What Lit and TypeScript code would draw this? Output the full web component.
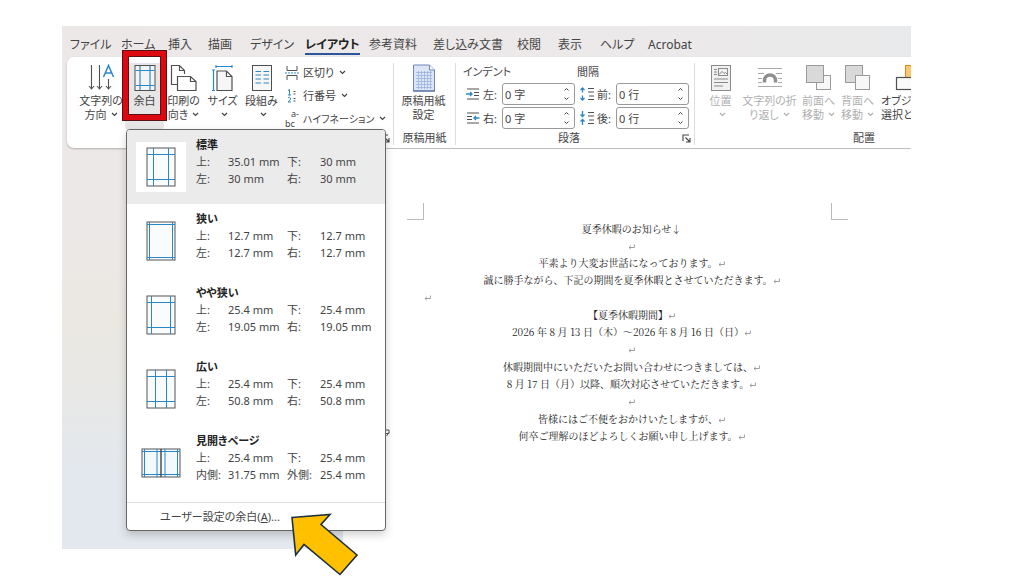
import { LitElement, html, svg, css } from "lit";
import { customElement, property } from "lit/decorators.js";

const GREY = "#505050";
const BLUE = "#2b88c8";

const icon = (w: number, h: number, body: unknown) =>
  html`<svg width=${w} height=${h} viewBox="0 0 ${w} ${h}" fill="none" aria-hidden="true">${body}</svg>`;

const chevron = html`<svg class="chev" width="7" height="5" viewBox="0 0 7 5" fill="none" stroke="currentColor" stroke-width="1.2" aria-hidden="true"><path d="M1 1l2.5 2.5L6 1"/></svg>`;

const icons = {
  direction: icon(28, 28, svg`
    <g stroke=${GREY} stroke-width="1.1"><path d="M4.5 1v24M2 22l2.5 3 2.5-3M12.5 1v24M10 22l2.5 3 2.5-3M21.5 15v10M19 22l2.5 3 2.5-3"/></g>
    <path d="M16.5 13L21.5 1.500L26.500 13M18.300 9h6.400" stroke=${BLUE} stroke-width="1.500"/>`),
  margins: icon(22, 28, svg`
    <rect x="1" y="1.500" width="20" height="25" fill="#f4f4f4" stroke=${GREY}/>
    <path d="M6 2v24M16 2v24M1.500 6.500h19M1.500 21.500h19" stroke=${BLUE} stroke-width="1.200"/>`),
  orientation: icon(28, 28, svg`
    <path d="M8 20.500H1.500v-19h8l5 5V10M9.500 1.500v5h5" stroke=${GREY} stroke-width="1.200"/>
    <path d="M7.500 12.500h13l5.500 5v9H7.500zM20.500 12.500v5H26" stroke=${GREY} stroke-width="1.200" fill="#fdfdfd"/>`),
  size: icon(24, 28, svg`
    <path d="M6 7h9.500l5.500 5.500v14H6zM15.500 7v5.500H21" stroke=${GREY} stroke-width="1.200" fill="#f6f6f6"/>
    <path d="M5 2.500h16M5 1v3M21 1v3M2.500 6v20.500M1 6h3M1 26.500h3" stroke=${BLUE} stroke-width="1.200"/>`),
  columns: icon(22, 28, svg`
    <rect x="1.500" y="1.500" width="19" height="25" fill="#f6f6f6" stroke=${GREY}/>
    <path d="M4.500 7.500h5.500M4.500 11h5.500M4.500 15h5.500M4.500 19h5.500M12.500 7.500H18M12.500 11H18M12.500 15H18M12.500 19H18" stroke=${BLUE} stroke-width="1.200"/>`),
  breaks: icon(14, 14, svg`
    <path d="M2 0v4.500h10V0M2 14V9.500h10V14" stroke=${GREY}/>
    <path d="M0 7h14" stroke=${BLUE} stroke-dasharray="2 1"/>`),
  lines: icon(14, 14, svg`
    <path d="M3 1.500l1.500-1V6M3 6h3M3 9q1.500-1.500 2.500 0t-2.500 4h3" stroke=${BLUE}/>
    <path d="M8.500 2.500h2M8.500 5h2M8.500 9.500h2M8.500 12h2" stroke=${GREY}/>`),
  manuscript: icon(24, 28, svg`
    <path d="M1.500 1h16l5 5v21h-21z" fill="#dbe5f6" stroke="#6f87b5"/>
    <path d="M17.500 1v5h5" fill="#f7faff" stroke="#6f87b5"/>
    <path d="M4 8.500h16M4 11.500h16M4 14.500h16M4 17.500h16M4 20.500h16M4 23.500h16M6.500 7v18M9.500 7v18M12.500 7v18M15.500 7v18M18.500 7v18" stroke="#9db3db" stroke-width=".8"/>
    <path d="M1 27h22" stroke="#4d6394"/>`),
  indentLeft: icon(14, 12, svg`
    <path d="M1 1h12M8 4.500h5M8 7.500h5M1 11h12" stroke=${GREY}/>
    <path d="M0 6h6M4 4l2 2-2 2" stroke=${BLUE} stroke-width="1.300"/>`),
  indentRight: icon(14, 12, svg`
    <path d="M1 1h12M1 4.500h5M1 7.500h5M1 11h12" stroke=${GREY}/>
    <path d="M13.500 6H8M10 4L8 6l2 2" stroke=${BLUE} stroke-width="1.300"/>`),
  before: icon(15, 14, svg`
    <path d="M8 1.500h6M8 5h6M9 9h5M8 12.500h6" stroke=${GREY}/>
    <path d="M2.500 5.500V1M.500 3l2-2 2 2M2.500 8.500V13M.500 11l2 2 2-2" stroke=${BLUE} stroke-width="1.300"/>`),
  after: icon(15, 14, svg`
    <path d="M8 1.500h6M8 5h6M9 9h5M8 12.500h6" stroke=${GREY}/>
    <path d="M2.500 0v5M.500 3.500l2 2 2-2M2.500 14V9M.500 10.500l2-2 2 2" stroke=${BLUE} stroke-width="1.300"/>`),
  position: icon(22, 28, svg`
    <rect x="1.500" y="1.500" width="19" height="25" fill="#f1f1f1" stroke="#8a8a8a"/>
    <rect x="8.500" y="4.500" width="9" height="7" stroke="#8a8a8a"/>
    <path d="M9 10.500l3-3 2 2 1.500-1 2 2M4 5.500h3M4 8h3M4 10.500h3M4 15h14M4 18.500h14M4 22h9" stroke="#8a8a8a"/>`),
  wrap: icon(26, 28, svg`
    <path d="M1 4.500h24M1 9.500h6M19 9.500h6M1 14.500h4M21 14.500h4M1 18.500h4M21 18.500h4M1 22.500h24" stroke="#aaa"/>
    <path d="M7.500 18.500v-2a5.500 5.500 0 0 1 11 0v2" stroke="#8f8f8f" stroke-width="3.500"/>`),
  forward: icon(27, 28, svg`
    <rect x="11.500" y="11.500" width="14" height="14" fill="#f7f7f7" stroke="#9a9a9a"/>
    <rect x="1.500" y="1.500" width="17" height="17" fill="#d9d9d9" stroke="#9a9a9a"/>`),
  backward: icon(27, 28, svg`
    <rect x="1.500" y="1.500" width="17" height="17" fill="#d9d9d9" stroke="#9a9a9a"/>
    <rect x="11.500" y="11.500" width="14" height="14" fill="#f7f7f7" stroke="#9a9a9a"/>`),
  selection: icon(28, 28, svg`
    <rect x="10.500" y="1.500" width="14" height="14" fill="#fbc870" stroke="#d68b1c"/>
    <rect x="1.500" y="13.500" width="18" height="12" fill="#fafafa" stroke=${GREY} stroke-width="1.200"/>`),
  launcher: icon(9, 9, svg`<path d="M1 7V1h6M3.500 3.500L8 8M8 4v4H4" stroke="#444" stroke-width="1.100"/>`),
  returnMark: html`<svg class="ret" width="7" height="6" viewBox="0 0 7 6" fill="none" stroke="#888" stroke-width=".8" aria-hidden="true"><path d="M6.400 .500v3H1M2.800 1.800L1 3.500l1.800 1.700"/></svg>`,
};

/** Thumbnail of a page with its margin guides. */
const pageThumb = (x: number, y: number) => icon(30, 40, svg`
  <rect x="1" y="1" width="28" height="38" fill="#fafbfc" stroke="#555"/>
  <path d="M${x} 1v38M${30 - x} 1v38M1 ${y}h28M1 ${40 - y}h28" stroke=${BLUE}/>`);

const spreadThumb = icon(40, 30, svg`
  <rect x="1" y="1" width="38" height="28" fill="#f3f9fd" stroke="#555"/>
  <path d="M3.500 1v28M16 1v28M24 1v28M36.500 1v28M1 3.500h38M1 26.500h38" stroke=${BLUE}/>
  <path d="M20 1v28" stroke="#444" stroke-width="1.400"/>`);

const presets = [
  { name: "標準", thumb: pageThumb(7.5, 7.5), rows: [["上:", "35.01 mm", "下:", "30 mm"], ["左:", "30 mm", "右:", "30 mm"]] },
  { name: "狭い", thumb: pageThumb(3.5, 3.5), rows: [["上:", "12.7 mm", "下:", "12.7 mm"], ["左:", "12.7 mm", "右:", "12.7 mm"]] },
  { name: "やや狭い", thumb: pageThumb(5.5, 7.5), rows: [["上:", "25.4 mm", "下:", "25.4 mm"], ["左:", "19.05 mm", "右:", "19.05 mm"]] },
  { name: "広い", thumb: pageThumb(9.5, 7.5), rows: [["上:", "25.4 mm", "下:", "25.4 mm"], ["左:", "50.8 mm", "右:", "50.8 mm"]] },
  { name: "見開きページ", thumb: spreadThumb, rows: [["上:", "25.4 mm", "下:", "25.4 mm"], ["内側:", "31.75 mm", "外側:", "25.4 mm"]] },
];

@customElement("margin-menu")
class MarginMenu extends LitElement {
  static styles = css`
    :host { display: block; box-sizing: border-box; background: #fff; border: 1px solid #666; border-radius: 4px; overflow: hidden; box-shadow: 0 4px 8px rgba(0, 0, 0, .18); }
    button { border: 0; padding: 0; background: none; font: inherit; color: inherit; font-feature-settings: "palt"; text-align: left; }
    .preset { display: grid; grid-template-columns: 50px 1fr; column-gap: 10px; width: 100%; height: 74px; padding: 6px 9px 0; align-items: start; }
    .preset.current { background: #ebebeb; }
    .thumb { display: flex; align-items: center; justify-content: center; height: 50px; margin-top: 6px; background: #fff; }
    .name { display: block; font-weight: 700; color: #222; line-height: 17px; }
    .row { display: grid; grid-template-columns: 32px 59px 33px 1fr; line-height: 17px; white-space: nowrap; }
    .custom { display: block; width: 100%; margin-top: 2px; border-top: 1px solid #ddd; padding: 5px 33px 4px; line-height: 18px; }
  `;
  render() {
    return html`
      ${presets.map((p, i) => html`
        <button class="preset ${i === 0 ? "current" : ""}">
          <span class="thumb">${p.thumb}</span>
          <span>
            <span class="name">${p.name}</span>
            ${p.rows.map((r) => html`<span class="row">${r.map((c) => html`<span>${c}</span>`)}</span>`)}
          </span>
        </button>`)}
      <button class="custom">ユーザー設定の余白(<u>A</u>)...</button>`;
  }
}

@customElement("spin-field")
class SpinField extends LitElement {
  @property() label = "";
  @property() value = "";
  @property({ attribute: false }) glyph: unknown;
  static styles = css`
    :host { display: grid; grid-template-columns: 17px 19px 73px; align-items: center; }
    svg { display: block; }
    .box { display: flex; box-sizing: border-box; height: 22px; border: 1px solid #999; border-radius: 3px; background: #fff; overflow: hidden; }
    input { flex: 1; min-width: 0; border: 0; padding: 2px 0 0 2px; outline: 0; background: none; font: inherit; color: inherit; }
    label { padding-top: 2px; }
    .steps { display: flex; flex-direction: column; width: 16px; padding: 1px 0; }
    .steps button { flex: 1; display: flex; align-items: center; justify-content: center; border: 0; padding: 0; background: none; color: #444; }
  `;
  render() {
    return html`
      ${this.glyph}
      <label for="v">${this.label}</label>
      <span class="box">
        <input id="v" type="text" .value=${this.value}>
        <span class="steps">
          <button aria-label="増やす"><svg width="7" height="5" viewBox="0 0 7 5" fill="none" stroke="currentColor"><path d="M1.500 3.500l2-2 2 2"/></svg></button>
          <button aria-label="減らす"><svg width="7" height="5" viewBox="0 0 7 5" fill="none" stroke="currentColor"><path d="M1.500 1.500l2 2 2-2"/></svg></button>
        </span>
      </span>`;
  }
}

const tabs = ["ファイル", "ホーム", "挿入", "描画", "デザイン", "レイアウト", "参考資料", "差し込み文書", "校閲", "表示", "ヘルプ", "Acrobat"];

const big = (glyph: unknown, a: string, b: string, arrow = true, cls = "") => html`
  <button class="big ${cls}">${glyph}<span>${a}</span><span>${b}${arrow ? chevron : ""}</span></button>`;

const ret = icons.returnMark;

@customElement("app-root")
class AppRoot extends LitElement {
  static styles = css`
    :host { display: block; min-height: 100vh; box-sizing: border-box; padding: 26px 113px 26px 62px; background: #fff; overflow: hidden;
      font: 11px/14px "Noto Sans", "Noto Sans CJK JP", sans-serif; font-feature-settings: "palt"; color: #444; }
    svg { flex: none; }
    button { border: 0; padding: 0; background: none; font: inherit; color: inherit; font-feature-settings: inherit; }
    .window { position: relative; background: linear-gradient(180deg, #ece8e7 40%, #ebe8e2 56%, #e8e8e6 70%, #e3e8ee 86%); }
    .clip { overflow: hidden; }
    .tabs { display: grid; grid-template-columns: 51px 47px 40px 42px 55px 64px 64px 84px 41px 42px 48px 1fr; height: 31px; padding-left: 8px; align-items: center;
      background: linear-gradient(90deg, #ede8e8, #ece9ea 70%, #e9eaeb); font-size: 12px; line-height: 16px; }
    .tabs a { justify-self: start; margin-top: 8px; color: #444; text-decoration: none; white-space: nowrap; border-bottom: 2px solid transparent; }
    .tabs a.on { font-weight: 700; color: #222; border-color: #2a579a; }
    .ribbon { display: flex; height: 91px; margin-left: 5px; padding-top: 6px; box-sizing: border-box; background: #fff; border-radius: 7px 0 0 7px; white-space: nowrap; box-shadow: 0 1px 2px rgba(0, 0, 0, .25); }
    .group { display: grid; grid-template-rows: 67px 16px; flex: none; box-sizing: border-box; border-right: 1px solid #ddd; margin-bottom: 3px; }
    .setup { width: 327px; }
    .manuscript { width: 62px; }
    .paragraph { width: 239px; }
    .arrange { width: 350px; border-right: 0; }
    .tools { display: flex; }
    .setup .tools { padding-left: 10px; }
    .arrange .tools { padding-left: 6px; }
    .caption { display: grid; grid-template-columns: 1fr 12px; align-items: center; text-align: center; line-height: 16px; }
    .caption span { grid-column: 1; }
    .manuscript .caption { grid-template-columns: 1fr; }
    .big { display: grid; grid-template-rows: 31px 14px 14px; justify-items: center; align-content: start; width: 39px; flex: none; }
    .big svg:first-child { margin-top: 1px; }
    .big.wide { width: 59px; }
    .big.active { background: #e6e6e6; border-radius: 4px; height: 67px; }
    .big.off { color: #b0b0b0; }
    .big .chev { margin: 0 0 2px 4px; }
    .big.first { width: 48px; }
    .big.cut { justify-items: start; width: 60px; margin-left: 4px; }
    .big.cut svg { margin-left: 14px; }
    .stack { display: grid; grid-template-rows: repeat(3, 23px); align-content: start; margin: -2px 0 0 4px; }
    .small { display: grid; grid-template-columns: 18px auto auto; align-items: center; justify-content: start; text-align: left; }
    .small .chev { margin-left: 5px; }
    .hyphen { display: flex; flex-direction: column; align-items: flex-end; width: 14px; font-size: 9px; line-height: 10px; }
    .hyphen span:last-child { align-self: flex-start; }
    .long { font-size: 10px; }
    .fields { display: grid; grid-template-columns: 109px 109px; column-gap: 5px; grid-template-rows: 18px 22px 22px; row-gap: 2px; padding-left: 10px; align-items: center; }
    .head { margin-left: -3px; }
    .margins-menu { position: absolute; left: 64px; top: 103px; width: 260px; }
    .frame { position: absolute; left: 61px; top: 25px; width: 43px; height: 69px; box-sizing: border-box; border: 5px solid #dc0a10; outline: 1px solid #5a1014; box-shadow: inset 0 0 0 1px #5a1014; }
    .pointer { position: absolute; left: 226px; top: 484px; }
    .stray { position: absolute; left: 322px; top: 403px; }
    .doc { display: grid; grid-template-columns: 281px 1fr; padding-top: 1px; }
    .page { min-height: 400px; box-sizing: border-box; padding: 54px 63px 0 64px; background: #fff; color: #222;
      font: 10px/17px "Noto Serif CJK JP", "Liberation Serif", "Noto Sans CJK JP", serif; font-feature-settings: normal; }
    .corners { display: flex; justify-content: space-between; }
    .corner { width: 17px; height: 17px; box-sizing: border-box; border: 1px solid #bbb; border-width: 0 1px 1px 0; }
    .corner.right { border-width: 0 0 1px 1px; }
    .body { display: grid; row-gap: 1px; margin: 0 9px 0 17px; text-align: center; white-space: nowrap; }
    p { margin: 0; }
    .left { text-align: left; }
  `;
  render() {
    return html`
      <main class="window">
        <div class="clip">
          <nav class="tabs">${tabs.map((t) => html`<a href="#" class=${t === "レイアウト" ? "on" : ""}>${t}</a>`)}</nav>
          <div class="ribbon">
            <section class="group setup">
              <div class="tools">
                ${big(icons.direction, "文字列の", "方向", true, "first")}
                ${big(icons.margins, "余白", "", false, "active")}
                ${big(icons.orientation, "印刷の", "向き")}
                ${big(icons.size, "サイズ", "")}
                ${big(icons.columns, "段組み", "")}
                <div class="stack">
                  <button class="small">${icons.breaks}<span>区切り</span>${chevron}</button>
                  <button class="small">${icons.lines}<span>行番号</span>${chevron}</button>
                  <button class="small"><span class="hyphen"><span>a-</span><span>bc</span></span><span class="long">ハイフネーション</span>${chevron}</button>
                </div>
              </div>
              <div class="caption"><span></span>${icons.launcher}</div>
            </section>
            <section class="group manuscript">
              <div class="tools">${big(icons.manuscript, "原稿用紙", "設定", false, "wide")}</div>
              <div class="caption"><span>原稿用紙</span></div>
            </section>
            <section class="group paragraph">
              <div class="fields">
                <span class="head">インデント</span><span class="head">間隔</span>
                <spin-field label="左:" value="0 字" .glyph=${icons.indentLeft}></spin-field>
                <spin-field label="前:" value="0 行" .glyph=${icons.before}></spin-field>
                <spin-field label="右:" value="0 字" .glyph=${icons.indentRight}></spin-field>
                <spin-field label="後:" value="0 行" .glyph=${icons.after}></spin-field>
              </div>
              <div class="caption"><span>段落</span>${icons.launcher}</div>
            </section>
            <section class="group arrange">
              <div class="tools">
                ${big(icons.position, "位置", "", true, "off")}
                ${big(icons.wrap, "文字列の折", "り返し", true, "off wide")}
                ${big(icons.forward, "前面へ", "移動", true, "off")}
                ${big(icons.backward, "背面へ", "移動", true, "off")}
                ${big(icons.selection, "オブジェ", "選択と", false, "cut")}
              </div>
              <div class="caption"><span>配置</span></div>
            </section>
          </div>
          <div class="doc">
            <span></span>
            <article class="page">
              <div class="corners"><span class="corner"></span><span class="corner right"></span></div>
              <div class="body">
                <div>
                  <p>夏季休暇のお知らせ↓</p>
                  <p>${ret}</p>
                  <p>平素より大変お世話になっております。${ret}</p>
                  <p>誠に勝手ながら、下記の期間を夏季休暇とさせていただきます。${ret}</p>
                  <p class="left">${ret}</p>
                </div>
                <div>
                  <p>【夏季休暇期間】${ret}</p>
                  <p>2026 年 8 月 13 日（木）～2026 年 8 月 16 日（日）${ret}</p>
                  <p>${ret}</p>
                </div>
                <div>
                  <p>休暇期間中にいただいたお問い合わせにつきましては、${ret}</p>
                  <p>8 月 17 日（月）以降、順次対応させていただきます。${ret}</p>
                  <p>${ret}</p>
                </div>
                <div>
                  <p>皆様にはご不便をおかけいたしますが、${ret}</p>
                  <p>何卒ご理解のほどよろしくお願い申し上げます。${ret}</p>
                </div>
              </div>
            </article>
          </div>
        </div>
        <svg class="stray" width="7" height="8" viewBox="0 0 7 8" fill="none" stroke="#555" aria-hidden="true"><path d="M0 1h5v3.500H1M5 3.500L2.500 7"/></svg>
        <margin-menu class="margins-menu"></margin-menu>
        <div class="frame"></div>
        <svg class="pointer" width="72" height="68" viewBox="0 0 72 68" aria-hidden="true"><path d="M4 7.500L42 4.500L33 14.500L69 45L52 64.500L16 34.500L7.700 45z" fill="#ffc000" stroke="#1d3040" stroke-width="1.600"/></svg>
      </main>`;
  }
}
